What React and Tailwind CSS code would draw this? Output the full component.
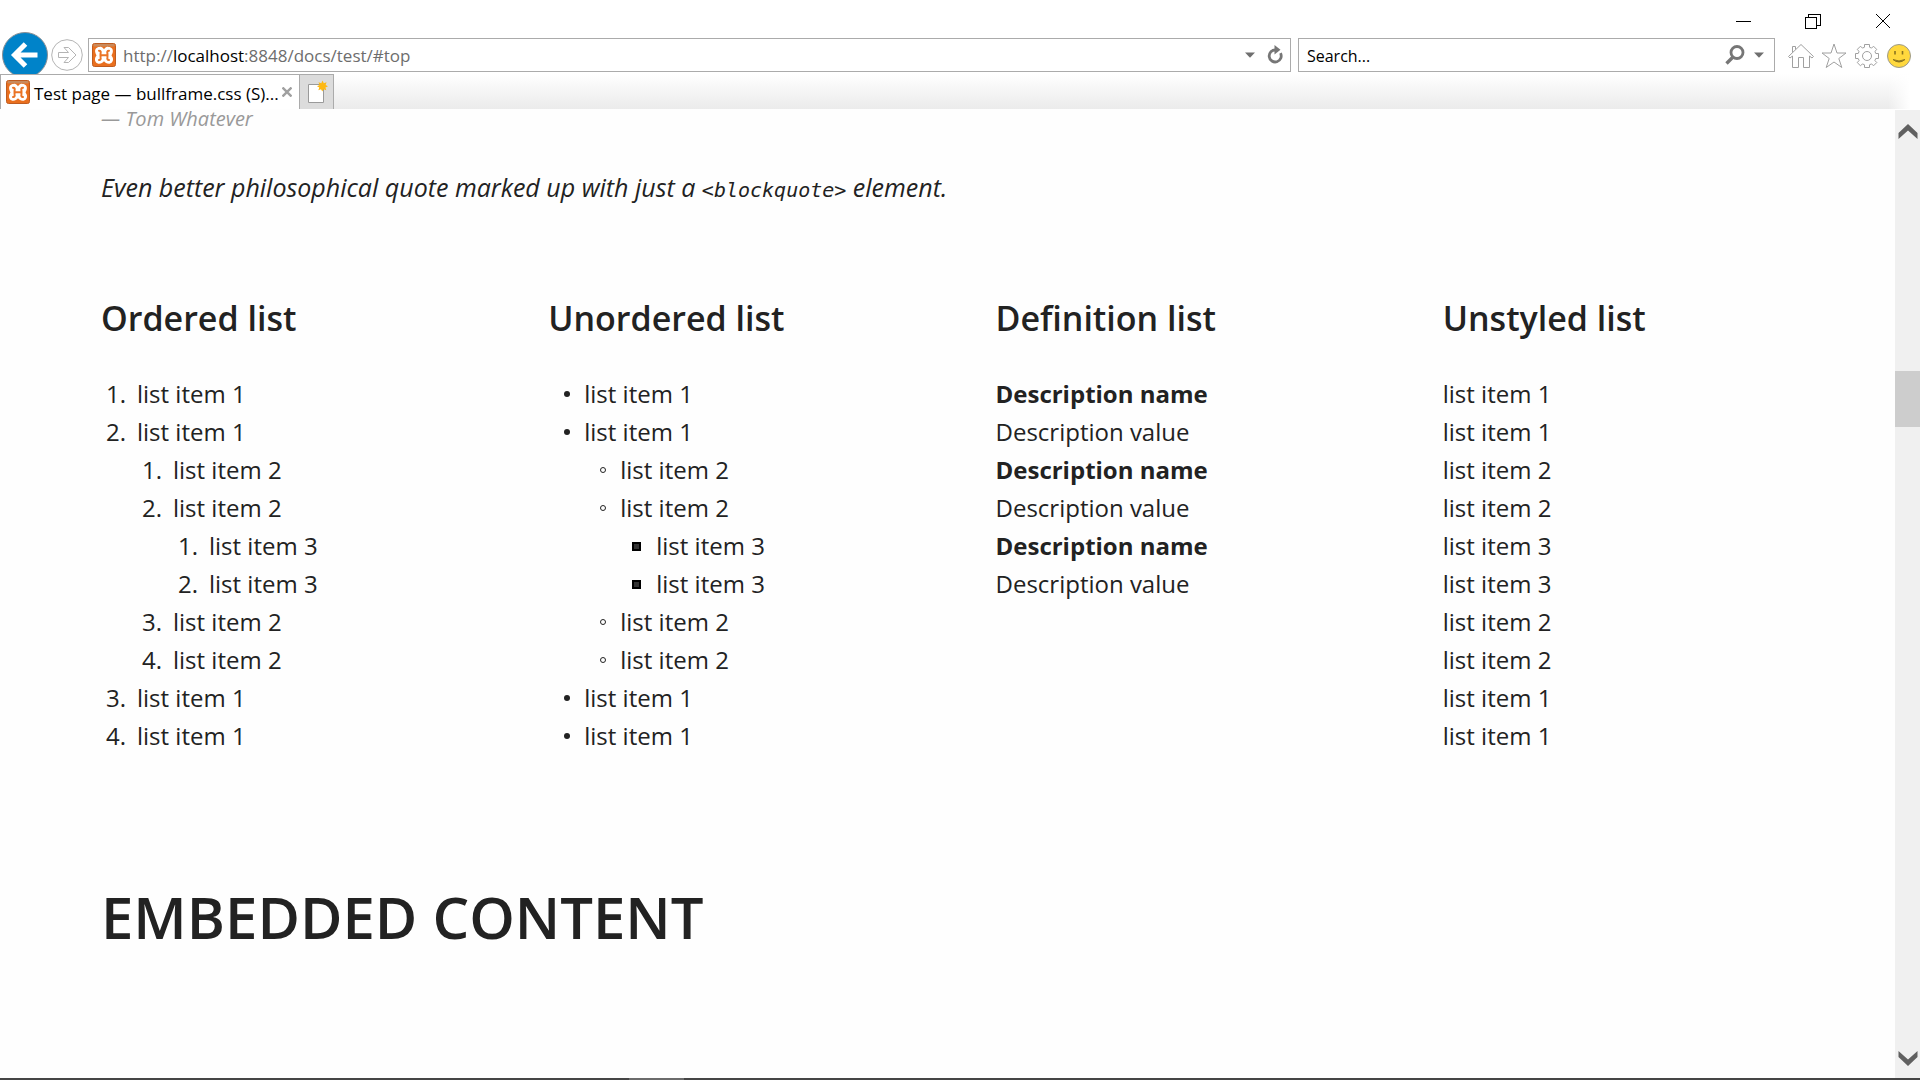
import React from "react";

const nested = [
  { text: "list item 1" },
  {
    text: "list item 1",
    children: [
      { text: "list item 2" },
      {
        text: "list item 2",
        children: [{ text: "list item 3" }, { text: "list item 3" }],
      },
      { text: "list item 2" },
      { text: "list item 2" },
    ],
  },
  { text: "list item 1" },
  { text: "list item 1" },
];

const definitions = [1, 2, 3];

function OrderedList({ items }) {
  return (
    <ol>
      {items.map((item, i) => (
        <li key={i} className="flex gap-[11px]">
          <span className="w-[25px] shrink-0 text-right">{i + 1}.</span>
          <div>
            {item.text}
            {item.children && <OrderedList items={item.children} />}
          </div>
        </li>
      ))}
    </ol>
  );
}

const bullets = [
  "size-1.5 rounded-full bg-[#222]",
  "size-1.5 rounded-full border border-[#222]",
  "size-[9px] border-2 border-black bg-[#333] mr-1.5",
];

function UnorderedList({ items, depth = 0 }) {
  return (
    <ul>
      {items.map((item, i) => (
        <li key={i} className="flex">
          <span className="flex h-[38px] w-9 shrink-0 items-center justify-center pl-0.5">
            <span className={bullets[depth]} />
          </span>
          <div>
            {item.text}
            {item.children && <UnorderedList items={item.children} depth={depth + 1} />}
          </div>
        </li>
      ))}
    </ul>
  );
}

function PlainList({ items }) {
  return (
    <ul>
      {items.map((item, i) => (
        <li key={i}>
          {item.text}
          {item.children && <PlainList items={item.children} />}
        </li>
      ))}
    </ul>
  );
}

function ListColumn({ title, children }) {
  return (
    <section>
      <h3 className="mb-[31px] text-[34px] leading-[52px] font-semibold">{title}</h3>
      {children}
    </section>
  );
}

function Favicon() {
  return (
    <svg viewBox="0 0 24 24" className="size-6 shrink-0" aria-hidden="true">
      <rect x="0.5" y="0.5" width="23" height="23" rx="2" fill="#e96f1e" stroke="#bf5c20" />
      <rect x="1.5" y="1" width="21" height="2.5" rx="1" fill="#c98a5c" />
      <path
        d="M7.500 4C9.500 3.500 10.800 4.500 12 6.300C13.200 4.500 14.500 3.500 16.500 4C19.800 4 21.300 6.500 20.800 9C20.600 10.500 19.800 11.500 19.500 12.300C19.800 13.200 20.800 14 21 15.800C21.300 18.600 19.500 20.800 16.800 20.800C14.600 20.800 13.300 19.800 12 18.300C10.700 19.800 9.400 20.800 7.200 20.800C4.500 20.800 2.700 18.600 3 15.800C3.200 14 4.200 13.200 4.500 12.300C4.200 11.500 3.400 10.500 3.200 9C2.700 6.500 4.200 4 7.500 4Z"
        fill="#fff"
      />
      <path
        d="M7 7.700C8.800 7.700 8.900 9 8.600 10.300C8.400 11.500 8.400 12.800 8.600 14.200C8.900 16 8.600 17.100 7 17M17 7.700C15.200 7.700 15.100 9 15.400 10.300C15.600 11.500 15.600 12.800 15.400 14.200C15.100 16 15.400 17.100 17 17M8.600 12.300H15.400"
        fill="none"
        stroke="#ea7426"
        strokeWidth="2"
        strokeLinecap="round"
      />
    </svg>
  );
}

function WindowControls() {
  return (
    <div className="flex h-[38px] items-start justify-end gap-[54px] pt-[13px] pr-[29px]">
      <button type="button" aria-label="Minimize">
        <svg viewBox="0 0 16 16" className="size-4" fill="none" stroke="#000" shapeRendering="crispEdges">
          <path d="M0.500 8.500H15.500" />
        </svg>
      </button>
      <button type="button" aria-label="Restore">
        <svg viewBox="0 0 16 16" className="size-4" fill="none" stroke="#000" shapeRendering="crispEdges">
          <path d="M0.500 4.500H11.500V15.500H0.500ZM3.500 4.500V1.500H15.500V12.500H11.500" />
        </svg>
      </button>
      <button type="button" aria-label="Close">
        <svg viewBox="0 0 16 16" className="size-4" fill="none" stroke="#000">
          <path d="M1 1L15 15M15 1L1 15" />
        </svg>
      </button>
    </div>
  );
}

function NavButtons() {
  return (
    <div className="flex h-9 items-start gap-[3px] overflow-visible">
      <button type="button" aria-label="Back" className="-mt-1.5">
        <svg viewBox="0 0 46 46" className="size-[46px]">
          <circle cx="23" cy="23" r="22.500" fill="#0083c9" stroke="#8a8f94" />
          <path
            d="M23.500 12L12.500 23L23.500 34M13 23H35.500"
            fill="none"
            stroke="#fff"
            strokeWidth="5"
          />
        </svg>
      </button>
      <button type="button" aria-label="Forward" className="mt-px">
        <svg viewBox="0 0 32 32" className="size-8" fill="none" stroke="#b4b4b4">
          <circle cx="16" cy="16" r="15.300" />
          <path d="M7.500 13.500H17.500L13 8.500H17.500L25 16L17.500 23.500H13L17.500 18.500H7.500Z" />
        </svg>
      </button>
    </div>
  );
}

function DropArrow() {
  return (
    <svg viewBox="0 0 10 6" className="h-1.5 w-2.5" aria-hidden="true">
      <path d="M0 0.500H10L5 5.800Z" fill="#6f6f6f" />
    </svg>
  );
}

function AddressBar() {
  return (
    <div className="flex h-[34px] flex-[723] items-center border border-[#ababab] bg-white pr-[5px] pl-[3px]">
      <Favicon />
      <div
        role="textbox"
        aria-label="Address"
        tabIndex={0}
        contentEditable
        suppressContentEditableWarning
        spellCheck={false}
        className="ml-[7px] flex-1 pt-0.5 text-[17px] leading-6 whitespace-nowrap text-[#6d6d6d] outline-none"
      >
        http://<span className="text-black">localhost</span>:8848/docs/test/#top
      </div>
      <button type="button" aria-label="Show address history" className="mr-2.5">
        <DropArrow />
      </button>
      <button type="button" aria-label="Refresh">
        <svg viewBox="0 0 20 20" className="size-5">
          <path d="M10.500 5A6 6 0 1 0 15.500 8.200" fill="none" stroke="#767676" strokeWidth="2.800" />
          <path d="M9.500 0L15.500 4.800L9.500 9.500Z" fill="#767676" />
        </svg>
      </button>
    </div>
  );
}

function SearchBox() {
  return (
    <form className="flex h-[34px] flex-[277] items-center border border-[#ababab] bg-white pr-2.5 pl-2">
      <input
        type="text"
        aria-label="Search"
        defaultValue="Search..."
        className="min-w-0 flex-1 bg-transparent pt-0.5 text-base leading-6 text-black outline-none"
      />
      <button type="button" aria-label="Run search" className="mr-2">
        <svg viewBox="0 0 22 22" className="size-[22px]" fill="none" stroke="#767676">
          <circle cx="13" cy="8.500" r="6" strokeWidth="2.800" />
          <path d="M9 13L2.500 19.500" strokeWidth="3.400" />
        </svg>
      </button>
      <button type="button" aria-label="Search options">
        <DropArrow />
      </button>
    </form>
  );
}

function ToolIcons() {
  return (
    <div className="flex h-9 items-center gap-[7px] pr-[9px] pl-[13px]">
      <button type="button" aria-label="Home">
        <svg viewBox="0 0 26 26" className="size-[26px]" fill="none" stroke="#a0a0a0">
          <path d="M13 1.500L0.500 13.500L2 15L4.500 13V24.500H10.500V14.500H15.500V24.500H21.500V13L24 15L25.500 13.500ZM4.500 9.500V3.500H7.500V6.500" />
        </svg>
      </button>
      <button type="button" aria-label="Favorites">
        <svg viewBox="0 0 26 26" className="size-[26px]" fill="none" stroke="#a0a0a0">
          <path d="M13 1L16 10H25L17.800 15.500L20.800 24.500L13 19L5.200 24.500L8.200 15.500L1 10H10Z" />
        </svg>
      </button>
      <button type="button" aria-label="Tools">
        <svg viewBox="0 0 26 26" className="size-[26px]" fill="none" stroke="#a0a0a0">
          <circle cx="13" cy="13" r="4.500" />
          <path d="M10.500 1.500H15.500V4.200L17.600 5.100L19.500 3.200L22.800 6.500L20.900 8.400L21.800 10.500H24.500V15.500H21.800L20.900 17.600L22.800 19.500L19.500 22.800L17.600 20.900L15.500 21.800V24.500H10.500V21.800L8.400 20.900L6.500 22.800L3.200 19.500L5.100 17.600L4.200 15.500H1.500V10.500H4.200L5.100 8.400L3.200 6.500L6.500 3.200L8.400 5.100L10.500 4.200Z" />
        </svg>
      </button>
      <button type="button" aria-label="Send feedback">
        <svg viewBox="0 0 24 24" className="size-6">
          <circle cx="12" cy="12" r="11.500" fill="#ffd83d" stroke="#9c9a8c" />
          <path d="M8 7V10.500M15.500 7V10.500" stroke="#8a7420" strokeWidth="1.600" />
          <path d="M6 15.500Q12 20.500 18 15.500Q12 18.500 6 15.500Z" fill="#8a7420" stroke="#8a7420" />
        </svg>
      </button>
    </div>
  );
}

function TabStrip() {
  return (
    <div className="relative flex h-[35px] bg-white">
      <div className="flex w-[300px] items-center border-x border-t border-[#ababab] bg-white pl-[5px]">
        <Favicon />
        <span className="ml-1 flex-1 pt-1 text-[17px] leading-6 whitespace-nowrap text-black">
          Test page — bullframe.css (S)...
        </span>
        <button type="button" aria-label="Close tab" className="mr-[7px]">
          <svg viewBox="0 0 10 10" className="size-2.5" stroke="#a0a0a0" strokeWidth="2.400">
            <path d="M0.500 0.500L9.500 9.500M9.500 0.500L0.500 9.500" />
          </svg>
        </button>
      </div>
      <button
        type="button"
        aria-label="New tab"
        className="flex w-[34px] items-center justify-center border-t border-r border-[#ababab] bg-[#dcdcdc]"
      >
        <svg viewBox="0 0 22 24" className="h-6 w-[22px]">
          <path d="M2.500 4.500H17.500V22.500H2.500Z" fill="#fff" stroke="#9a9a9a" />
          <path
            d="M16.500 0.500L17.800 3.200L20.600 2.200L19.600 5L22 6.300L19.400 7.500L20.300 10.200L17.600 9.200L16.300 11.500L15 9.200L12.300 10.200L13.300 7.500L11 6.200L13.500 5L12.500 2.200L15.300 3.200Z"
            fill="#fdb813"
          />
        </svg>
      </button>
      <div className="flex flex-1 justify-end bg-linear-to-b from-white to-[#ebebeb]">
        <div className="w-8 bg-linear-to-r from-transparent to-white to-70%" />
      </div>
    </div>
  );
}

function ScrollBar() {
  return (
    <div className="mt-px flex w-[25px] shrink-0 flex-col items-center bg-[#f0f0f0]" aria-hidden="true">
      <div className="flex flex-[262] items-start pt-3.5">
        <svg viewBox="0 0 20 15" className="h-[15px] w-5">
          <path d="M10 0L19.500 9V15L10 6.500L0.500 15V9Z" fill="#606060" />
        </svg>
      </div>
      <div className="w-full flex-[59] bg-[#cdcdcd]" />
      <div className="flex flex-[678] items-end pb-3">
        <svg viewBox="0 0 20 15" className="h-[15px] w-5">
          <path d="M10 15L19.500 6V0L10 8.500L0.500 0V6Z" fill="#606060" />
        </svg>
      </div>
    </div>
  );
}

export default function App() {
  return (
    <div className="flex h-screen flex-col overflow-hidden bg-white font-['Open_Sans','Noto_Sans',sans-serif] text-[#222]">
      <header className="shrink-0">
        <WindowControls />
        <div className="flex h-9 items-start pl-0.5">
          <NavButtons />
          <div className="flex min-w-0 flex-1 gap-[7px] pl-[5px]">
            <AddressBar />
            <SearchBox />
          </div>
          <ToolIcons />
        </div>
        <TabStrip />
      </header>

      <div className="flex min-h-0 flex-1">
        <main className="min-w-0 flex-1 bg-[#fefefe] px-[101px] text-2xl leading-[38px]">
          <cite className="block text-xl leading-5 text-[#999]">— Tom Whatever</cite>
          <blockquote className="mt-[39px] text-[25px] italic">
            Even better philosophical quote marked up with just a{" "}
            <code className="font-['DejaVu_Sans_Mono',monospace] text-xl">&lt;blockquote&gt;</code> element.
          </blockquote>

          <div className="mt-[86px] grid grid-cols-4 gap-24">
            <ListColumn title="Ordered list">
              <OrderedList items={nested} />
            </ListColumn>
            <ListColumn title="Unordered list">
              <UnorderedList items={nested} />
            </ListColumn>
            <ListColumn title="Definition list">
              <dl>
                {definitions.map((n) => (
                  <div key={n}>
                    <dt className="font-bold">Description name</dt>
                    <dd>Description value</dd>
                  </div>
                ))}
              </dl>
            </ListColumn>
            <ListColumn title="Unstyled list">
              <PlainList items={nested} />
            </ListColumn>
          </div>

          <h2 className="mt-[126px] text-[58px] leading-[72px] font-semibold">EMBEDDED CONTENT</h2>
        </main>
        <ScrollBar />
      </div>

      <div className="flex h-0.5 shrink-0 bg-[#454545]">
        <div className="flex-[629]" />
        <div className="flex-[55] bg-[#6b6b6b]" />
        <div className="flex-[1236]" />
      </div>
    </div>
  );
}
